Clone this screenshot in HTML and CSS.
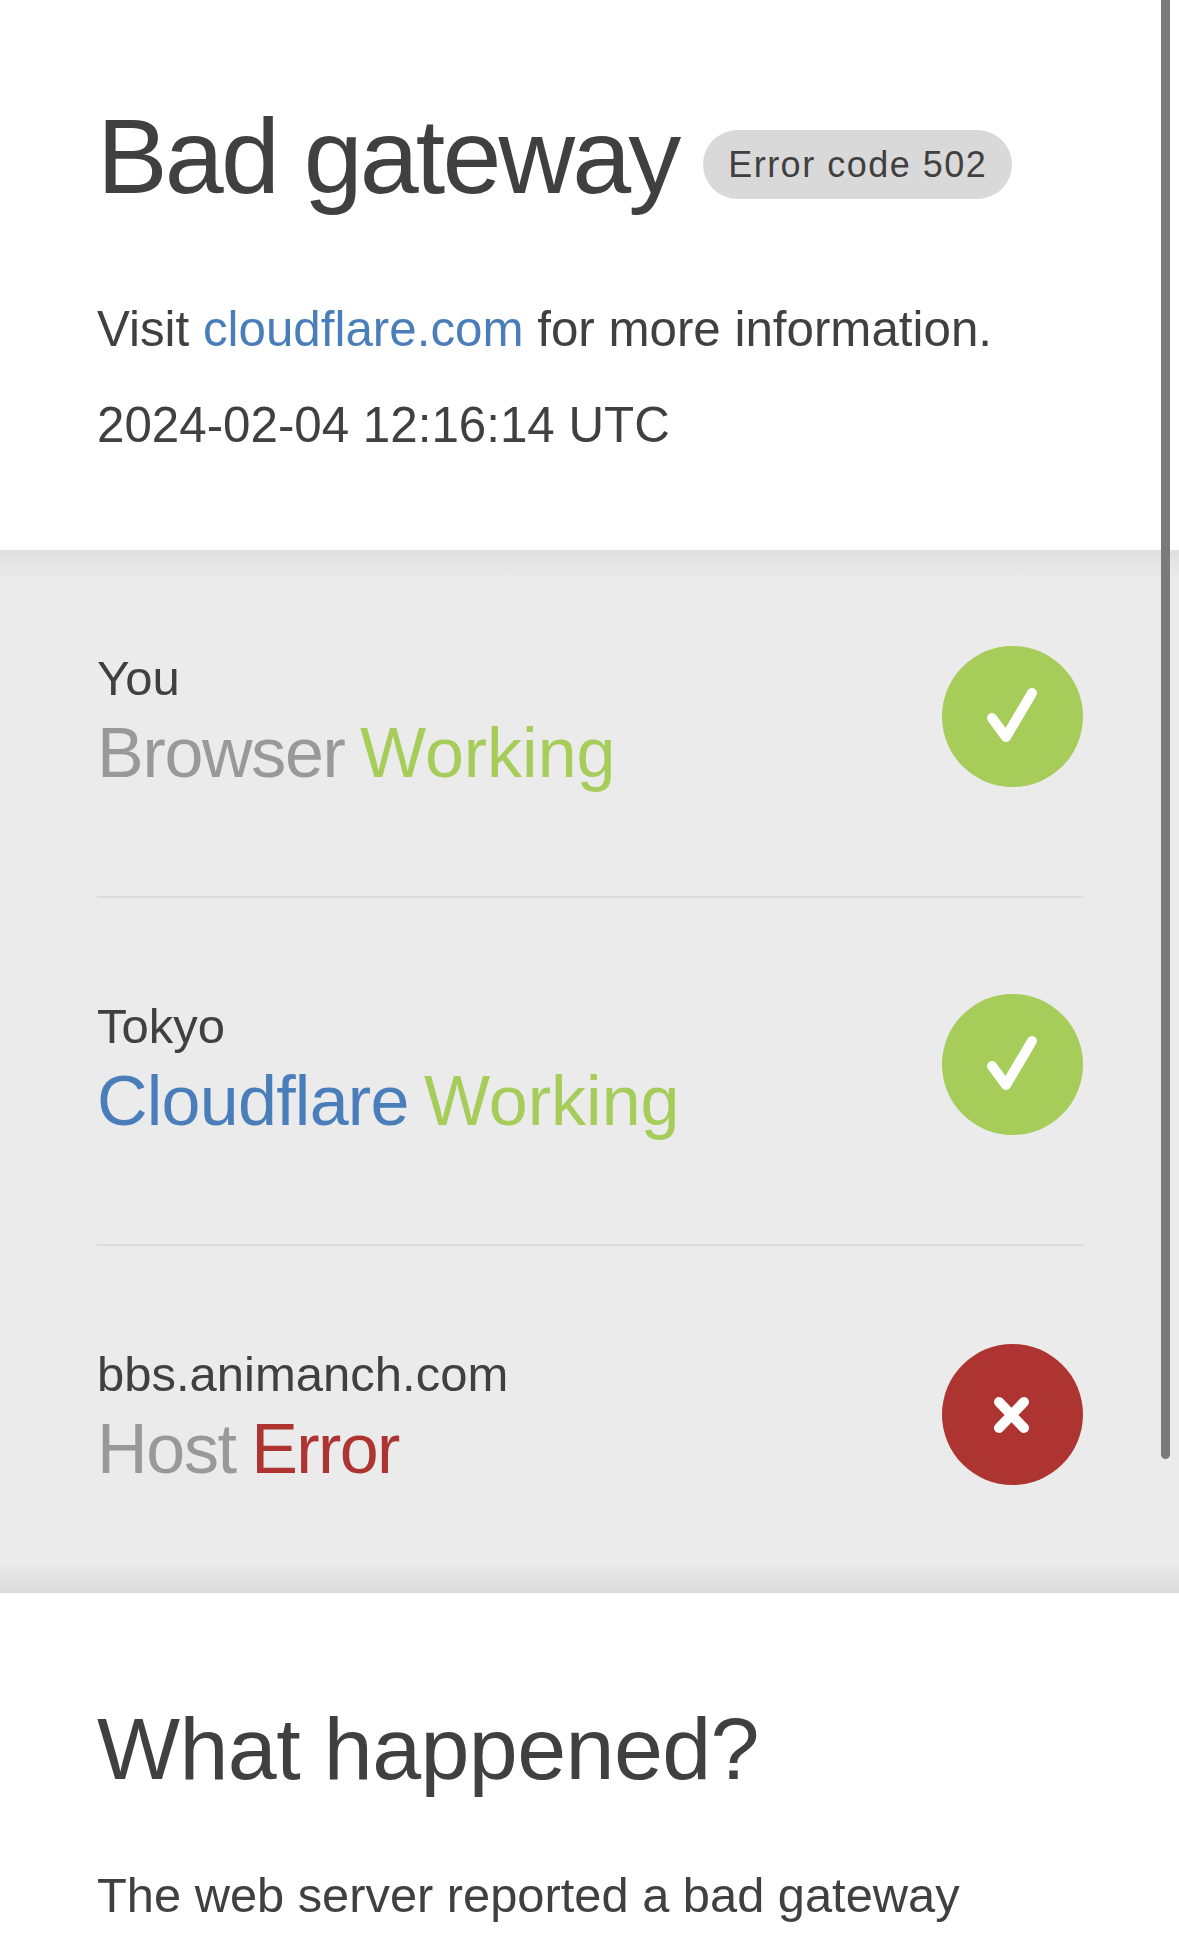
FILE: index.html
```html
<!DOCTYPE html>
<html lang="en">
<head>
    <meta charset="UTF-8">
    <meta name="viewport" content="width=device-width, initial-scale=1.0">
    <title>Bad gateway | Error code 502</title>
    <link rel="stylesheet" href="styles.css">
</head>
<body>
    <header class="intro">
        <h1 class="title">Bad gateway <span class="code-chip">Error code 502</span></h1>
        <p class="intro-line">Visit <a href="#" class="link">cloudflare.com</a> for more information.</p>
        <p class="intro-line timestamp">2024-02-04 12:16:14 UTC</p>
    </header>

    <section class="status-panel">
        <div class="status-row">
            <div class="status-text">
                <div class="place">You</div>
                <div class="state"><span class="muted">Browser</span> <span class="ok">Working</span></div>
            </div>
            <div class="badge badge-ok">
                <svg viewBox="0 0 141 141" class="badge-icon"><path d="M50 72 L64 91 L90 47"/></svg>
            </div>
        </div>
        <div class="status-row">
            <div class="status-text">
                <div class="place">Tokyo</div>
                <div class="state"><span class="link">Cloudflare</span> <span class="ok">Working</span></div>
            </div>
            <div class="badge badge-ok">
                <svg viewBox="0 0 141 141" class="badge-icon"><path d="M50 72 L64 91 L90 47"/></svg>
            </div>
        </div>
        <div class="status-row">
            <div class="status-text">
                <div class="place">bbs.animanch.com</div>
                <div class="state"><span class="muted">Host</span> <span class="bad">Error</span></div>
            </div>
            <div class="badge badge-bad">
                <svg viewBox="0 0 141 141" class="badge-icon"><path d="M57 58 L82 84 M82 58 L57 84"/></svg>
            </div>
        </div>
    </section>

    <section class="details">
        <h2 class="details-title">What happened?</h2>
        <p class="details-text">The web server reported a bad gateway</p>
    </section>

    <div class="scrollbar"></div>
</body>
</html>
```

FILE: styles.css
```css
body {
    margin: 0;
    height: 1949px;
    overflow: hidden;
    font-family: "Liberation Sans", Arial, sans-serif;
    color: #404040;
    background: #fff;
}
.intro {
    height: 550px;
    box-sizing: border-box;
    padding: 96px 96px 0 97px;
}
.title {
    margin: 0 0 86px;
    font-size: 106px;
    font-weight: 400;
    letter-spacing: -2.85px;
    line-height: 120px;
    white-space: nowrap;
}
.code-chip {
    display: inline-block;
    vertical-align: 16px;
    margin-left: -2px;
    padding: 0 25px;
    height: 69px;
    line-height: 69px;
    border-radius: 35px;
    background: #d9d9d9;
    font-size: 36px;
    letter-spacing: 1.5px;
}
.intro-line {
    margin: 0 0 42px;
    font-size: 49.3px;
    line-height: 54px;
}
.link {
    color: #4a7ebb;
    text-decoration: none;
}
.status-panel {
    height: 1043px;
    box-sizing: border-box;
    padding: 0 96px 0 97px;
    background: linear-gradient(#dfdfdf, #ebebeb 30px, #ebebeb 1013px, #dadada);
}
.status-row {
    display: flex;
    justify-content: space-between;
    align-items: flex-start;
    height: 348px;
    box-sizing: border-box;
    padding-top: 96px;
    border-bottom: 2px solid #dcdcdc;
}
.status-row:last-child {
    border-bottom: none;
}
.status-text {
    padding-top: 5px;
}
.place {
    font-size: 49px;
    line-height: 54px;
}
.state {
    font-size: 70px;
    word-spacing: -4px;
    line-height: 80px;
    margin-top: 8px;
}
.state .link {
    letter-spacing: -0.75px;
}
.muted {
    color: #999;
    letter-spacing: -1.3px;
}
.ok {
    color: #a6cc59;
}
.bad {
    color: #ad3430;
    letter-spacing: -1.6px;
}
.badge {
    width: 141px;
    height: 141px;
    border-radius: 50%;
}
.badge-ok {
    background: #a6cc59;
}
.badge-bad {
    margin-top: 2px;
    background: #ad3430;
}
.badge-icon {
    display: block;
    fill: none;
    stroke: #fff;
    stroke-width: 10;
    stroke-linecap: round;
    stroke-linejoin: round;
}
.details {
    padding: 106px 97px 0;
}
.details-title {
    margin: 0 0 66px;
    font-size: 88px;
    font-weight: 400;
    letter-spacing: -0.6px;
    line-height: 100px;
}
.details-text {
    margin: 0;
    font-size: 48.8px;
    line-height: 60px;
}
.scrollbar {
    position: absolute;
    top: 0;
    left: 1161px;
    width: 9px;
    height: 1459px;
    border-radius: 0 0 5px 5px;
    background: #7a7a7a;
}
```
